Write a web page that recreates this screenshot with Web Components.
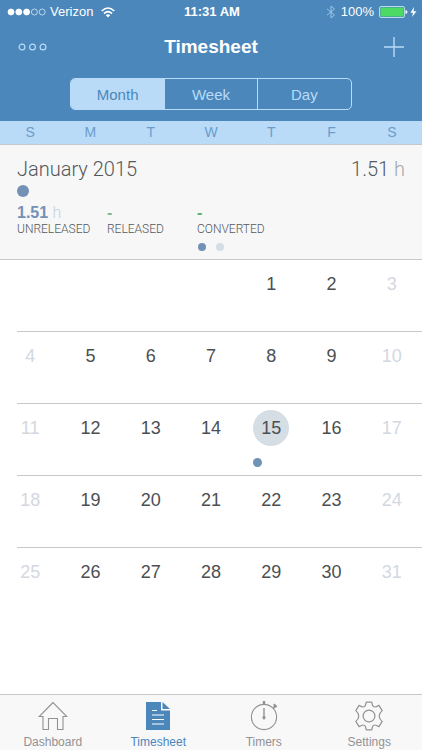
<!DOCTYPE html>
<html lang="en">
<head>
<meta charset="utf-8">
<meta name="viewport" content="width=device-width, initial-scale=1">
<title>Timesheet</title>
<style>
  :root {
    --blue: #4b87bb;
    --sky: #b9dbf8;
    --dot: #7291b7;
    --pale: #d5dde5;
    --line: #c8c8ca;
    --text: #55585b;
    --light: Roboto, "Liberation Sans", sans-serif;
  }
  body {
    margin: 0;
    min-height: 100vh;
    display: flex;
    flex-direction: column;
    background: #fff;
    color: var(--text);
    font-family: "Liberation Sans", Arial, sans-serif;
  }
  month-calendar { flex: 1; }
</style>
</head>
<body>
  <app-header title="Timesheet">
    <status-bar slot="status" carrier="Verizon" time="11:31 AM" battery="100%"></status-bar>
    <segment-control options="Month,Week,Day" selected="Month"></segment-control>
  </app-header>
  <weekday-strip></weekday-strip>
  <period-summary period="January 2015" total="1.51">
    <hour-stat label="UNRELEASED" value="1.51" unit="h"></hour-stat>
    <hour-stat label="RELEASED" value="-" style="--stat: #86b894"></hour-stat>
    <hour-stat label="CONVERTED" value="-" style="--stat: #5cb567"></hour-stat>
  </period-summary>
  <month-calendar days="31" offset="4" today="15" logged="15"></month-calendar>
  <tab-bar>
    <tab-item label="Dashboard" href="#dashboard">
      <svg width="30" height="30" viewBox="0 0 30 30" fill="none" stroke="currentColor" stroke-width="1.1"><path d="M15 1.5 1.2 15.5H5V28.5H10.5V17.5H19.5V28.5H25V15.5H28.8Z"/></svg>
    </tab-item>
    <tab-item label="Timesheet" href="#timesheet" active>
      <svg width="30" height="30" viewBox="0 0 30 30"><path fill="currentColor" d="M3 1H18V9.5H27V29H3ZM19.5 1 27 8H19.5Z"/><path d="M9 9.5H14M9 14H21M9 18.5H21M9 23H21" stroke="#fff" stroke-width="1.2"/></svg>
    </tab-item>
    <tab-item label="Timers" href="#timers">
      <svg width="30" height="30" viewBox="0 0 30 30" fill="none" stroke="currentColor" stroke-width="1.1"><circle cx="15" cy="16" r="12.6"/><path d="M15 7V18.5" stroke-width="1.4"/><circle cx="15" cy="16.5" r="1.6" fill="currentColor" stroke="none"/><path d="M15 0V4" stroke-width="2.4"/><path d="M24.4 7 26.4 5M24.8 3.2 27.6 6" stroke-width="2"/></svg>
    </tab-item>
    <tab-item label="Settings" href="#settings">
      <svg width="30" height="30" viewBox="0 0 30 30" fill="none" stroke="currentColor" stroke-width="1.2" stroke-linejoin="round"><circle cx="15" cy="15" r="5.9"/><path d="M12.2 1.2H17.8L18.6 4.6Q19.3 6 20.8 6Q22 6 24.9 4.4L28.2 9.6Q25.2 12 25.2 15Q25.2 18 28.2 20.4L24.9 25.6Q22 24 20.8 24Q19.3 24 18.6 25.4L17.8 28.8H12.2L11.4 25.4Q10.7 24 9.2 24Q8 24 5.1 25.6L1.8 20.4Q4.8 18 4.8 15Q4.8 12 1.8 9.6L5.1 4.4Q8 6 9.2 6Q10.7 6 11.4 4.6Z"/></svg>
    </tab-item>
  </tab-bar>

<script>
class BaseElement extends HTMLElement {
  constructor() {
    super();
    this.attachShadow({ mode: "open" });
  }

  attr(name) {
    return this.getAttribute(name) || "";
  }

  connectedCallback() {
    const template = document.createElement("template");
    template.innerHTML = this.getTemplate() + this.getStyles();
    this.shadowRoot.appendChild(template.content.cloneNode(true));
  }
}

class StatusBar extends BaseElement {
  getTemplate() {
    return /*html*/ `
      <div class="side">
        <svg width="39" height="8" viewBox="0 0 39 8" fill="#fff" stroke="#fff" stroke-width=".8">
          <circle cx="4" cy="4" r="3"/><circle cx="11.8" cy="4" r="3"/><circle cx="19.6" cy="4" r="3"/>
          <g fill="none" stroke="#d5e6f5"><circle cx="27.4" cy="4" r="3"/><circle cx="35.2" cy="4" r="3"/></g>
        </svg>
        <span>${this.attr("carrier")}</span>
        <svg class="wifi" width="14" height="11" viewBox="0 0 14 11" fill="none" stroke="#fff" stroke-width="1.6">
          <path d="M.7 4Q7-2 13.3 4M3 6.6Q7 2.8 11 6.6"/><path d="M4.8 8.2Q7 6.4 9.2 8.2L7 10.6Z" fill="#fff" stroke="none"/>
        </svg>
      </div>
      <time>${this.attr("time")}</time>
      <div class="side end">
        <svg width="10" height="14" viewBox="0 0 10 14" fill="none" stroke="#9cc3e6"><path d="M1 3.8 8.5 10 5 13V1L8.5 4 1 10.2"/></svg>
        <span>${this.attr("battery")}</span>
        <svg width="38" height="12" viewBox="0 0 38 12">
          <rect x=".5" y=".5" width="25" height="11" rx="1.5" fill="none" stroke="#b9d9f0"/>
          <rect x="1.5" y="1.5" width="23" height="9" fill="#4cd964"/>
          <path d="M26.5 4Q28.5 4.5 28.5 6T26.5 8Z" fill="#fff"/>
          <path d="M35 1 31.5 6.8H34L33 11 37.5 5.2H34.6Z" fill="#fff"/>
        </svg>
      </div>`;
  }

  getStyles() {
    return /*html*/ `
      <style>
        :host {
          display: grid;
          grid-template-columns: 1fr auto 1fr;
          align-items: center;
          height: 24px;
          padding: 0 5px 0 7px;
          font-size: 13px;
          line-height: 16px;
        }
        .side { display: flex; align-items: center; gap: 4px; }
        .wifi { margin-left: 4px; }
        .end { justify-content: flex-end; gap: 5px; }
        time { font-weight: bold; }
        svg { display: block; }
      </style>`;
  }
}

class AppHeader extends BaseElement {
  getTemplate() {
    return /*html*/ `
      <slot name="status"></slot>
      <nav>
        <button aria-label="More">
          <svg width="30" height="8" viewBox="0 0 30 8" fill="none" stroke="currentColor" stroke-width="1.2"><circle cx="4" cy="4" r="2.9"/><circle cx="14.5" cy="4" r="2.9"/><circle cx="25" cy="4" r="2.9"/></svg>
        </button>
        <h1>${this.attr("title")}</h1>
        <button class="add" aria-label="Add entry">
          <svg width="20" height="20" viewBox="0 0 20 20" stroke="currentColor" stroke-width="1.4"><path d="M10 0V20M0 10H20"/></svg>
        </button>
      </nav>
      <slot></slot>`;
  }

  getStyles() {
    return /*html*/ `
      <style>
        :host {
          display: block;
          padding-bottom: 11px;
          background: var(--blue);
          color: #fff;
        }
        nav {
          display: grid;
          grid-template-columns: 1fr auto 1fr;
          align-items: center;
          height: 46px;
          padding: 0 18px;
          margin-bottom: 8px;
        }
        h1 { margin: 0; font-size: 19px; line-height: 24px; }
        button {
          justify-self: start;
          padding: 0;
          border: 0;
          background: none;
          color: var(--sky);
        }
        .add { justify-self: end; }
        svg { display: block; }
      </style>`;
  }
}

class SegmentControl extends BaseElement {
  getTemplate() {
    const selected = this.attr("selected");
    return this.attr("options").split(",").map(name => /*html*/ `
      <button aria-pressed="${name === selected}">${name}</button>`).join("");
  }

  getStyles() {
    return /*html*/ `
      <style>
        :host {
          display: flex;
          box-sizing: border-box;
          width: 66.6%;
          height: 32px;
          margin: 0 auto;
          border: 1px solid var(--sky);
          border-radius: 5px;
          overflow: hidden;
        }
        button {
          flex: 1;
          padding: 0;
          border: 0;
          background: none;
          color: var(--sky);
          font: inherit;
          font-size: 15px;
        }
        button + button { border-left: 1px solid var(--sky); }
        button[aria-pressed="true"] { background: var(--sky); color: var(--blue); }
      </style>`;
  }
}

class WeekdayStrip extends BaseElement {
  getTemplate() {
    return [..."SMTWTFS"].map(day => `<span>${day}</span>`).join("");
  }

  getStyles() {
    return /*html*/ `
      <style>
        :host {
          display: grid;
          grid-template-columns: repeat(7, 1fr);
          border-bottom: 1px solid #c3c8cd;
          background: var(--sky);
          color: #6a9dcb;
          font-size: 14px;
          line-height: 23px;
          text-align: center;
        }
      </style>`;
  }
}

class HourStat extends BaseElement {
  getTemplate() {
    return /*html*/ `
      <div class="value">${this.attr("value")} <span>${this.attr("unit")}</span></div>
      <div class="label">${this.attr("label")}</div>`;
  }

  getStyles() {
    return /*html*/ `
      <style>
        :host { display: block; width: 90px; }
        .value {
          color: var(--stat, var(--dot));
          font-size: 16px;
          font-weight: bold;
          line-height: 16px;
        }
        .value span { color: #c6d0dc; font-family: var(--light); font-weight: 300; }
        .label { font-family: var(--light); font-size: 12px; font-weight: 300; line-height: 16px; }
      </style>`;
  }
}

class PeriodSummary extends BaseElement {
  getTemplate() {
    return /*html*/ `
      <header>
        <h2>${this.attr("period")}</h2>
        <div>${this.attr("total")} <span>h</span></div>
      </header>
      <i class="mark"></i>
      <div class="stats"><slot></slot></div>
      <div class="pages"><i></i><i></i></div>`;
  }

  getStyles() {
    return /*html*/ `
      <style>
        :host {
          display: block;
          padding: 12px 17px 8px;
          border-bottom: 1px solid var(--line);
          background: #f7f7f7;
        }
        header {
          display: flex;
          justify-content: space-between;
          font-family: var(--light);
          font-size: 20px;
          font-weight: 300;
          line-height: 24px;
        }
        h2 { margin: 0; font: inherit; }
        header span { color: #a5a8ab; }
        i { display: block; border-radius: 50%; background: var(--dot); }
        .mark { width: 12px; height: 12px; margin: 4px 0 8px; }
        .stats { display: flex; }
        .pages { display: flex; justify-content: center; gap: 10px; margin-top: 6px; }
        .pages i { width: 8px; height: 8px; }
        .pages i + i { background: var(--pale); }
      </style>`;
  }
}

class MonthCalendar extends BaseElement {
  getCell(day, column) {
    if (day < 1 || day > Number(this.attr("days"))) return "<td></td>";
    const classes = [];
    if (column === 0 || column === 6) classes.push("weekend");
    if (day === Number(this.attr("today"))) classes.push("today");
    const dot = day === Number(this.attr("logged")) ? "<i></i>" : "";
    return `<td class="${classes.join(" ")}"><button>${day}</button>${dot}</td>`;
  }

  getTemplate() {
    const offset = Number(this.attr("offset"));
    const weeks = Math.ceil((Number(this.attr("days")) + offset) / 7);
    let rows = "";
    for (let week = 0; week < weeks; week++) {
      rows += "<tr>";
      for (let column = 0; column < 7; column++) {
        rows += this.getCell(week * 7 + column - offset + 1, column);
      }
      rows += "</tr>";
    }
    return `<table>${rows}</table>`;
  }

  getStyles() {
    return /*html*/ `
      <style>
        :host { display: block; }
        table { width: 100%; border-collapse: collapse; table-layout: fixed; }
        tr:not(:last-child) {
          background: linear-gradient(var(--line), var(--line)) 17px 100% / 100% 1px no-repeat;
        }
        td { height: 66px; padding: 6px 0 0; text-align: center; vertical-align: top; }
        button {
          display: block;
          width: 36px;
          height: 36px;
          margin: 0 auto;
          padding: 0;
          border: 0;
          border-radius: 50%;
          background: none;
          color: #4c4f52;
          font: inherit;
          font-size: 18px;
        }
        .weekend button { color: #d3d8e0; }
        .today button { background: var(--pale); }
        i {
          display: block;
          width: 9px;
          height: 9px;
          margin: 12px 0 0 12px;
          border-radius: 50%;
          background: var(--dot);
        }
      </style>`;
  }
}

class TabBar extends BaseElement {
  getTemplate() {
    return "<nav><slot></slot></nav>";
  }

  getStyles() {
    return /*html*/ `
      <style>
        :host { display: block; border-top: 1px solid var(--line); background: #f8f8f9; }
        nav { display: flex; }
      </style>`;
  }
}

class TabItem extends BaseElement {
  getTemplate() {
    return /*html*/ `
      <a href="${this.attr("href")}"><slot></slot><span>${this.attr("label")}</span></a>`;
  }

  getStyles() {
    return /*html*/ `
      <style>
        :host { display: block; flex: 1; color: #929292; }
        :host([active]) { color: var(--blue); }
        a {
          display: flex;
          flex-direction: column;
          align-items: center;
          padding: 6px 0 1px;
          color: inherit;
          font-size: 12px;
          line-height: 14px;
          text-decoration: none;
        }
        span { margin-top: 4px; }
      </style>`;
  }
}

customElements.define("status-bar", StatusBar);
customElements.define("app-header", AppHeader);
customElements.define("segment-control", SegmentControl);
customElements.define("weekday-strip", WeekdayStrip);
customElements.define("hour-stat", HourStat);
customElements.define("period-summary", PeriodSummary);
customElements.define("month-calendar", MonthCalendar);
customElements.define("tab-bar", TabBar);
customElements.define("tab-item", TabItem);
</script>
</body>
</html>
